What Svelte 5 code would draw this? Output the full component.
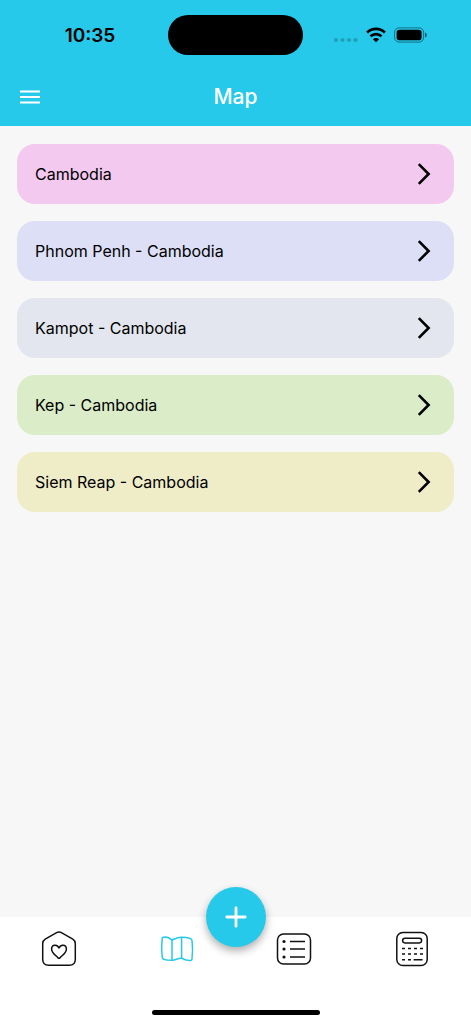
<script lang="ts">
	const places = [
		{ name: 'Cambodia', tone: 'pink' },
		{ name: 'Phnom Penh - Cambodia', tone: 'lavender' },
		{ name: 'Kampot - Cambodia', tone: 'grey' },
		{ name: 'Kep - Cambodia', tone: 'green' },
		{ name: 'Siem Reap - Cambodia', tone: 'yellow' }
	];
</script>

<div class="screen">
	<header>
		<div class="status-bar">
			<time class="clock">10:35</time>
			<div class="island"></div>
			<div class="indicators">
				<svg class="signal" width="24" height="16" viewBox="0 0 24 16">
					<circle cx="2" cy="13" r="2.1" />
					<circle cx="8.5" cy="13" r="2.1" />
					<circle cx="15" cy="13" r="2.1" />
					<circle cx="21.5" cy="13" r="2.1" />
				</svg>
				<svg width="20" height="16" viewBox="0 0 20 16">
					<path d="M1.1 5.6C6.1.7 13.9.7 18.9 5.6" fill="none" stroke="#000" stroke-width="2.7" />
					<path d="M4.5 9.3C7.7 6.3 12.3 6.3 15.5 9.3" fill="none" stroke="#000" stroke-width="2.7" />
					<path d="M10 15.3 6.9 12.2C8.7 10.6 11.3 10.6 13.1 12.2Z" />
				</svg>
				<svg width="33" height="16" viewBox="0 0 33 16">
					<rect x=".6" y=".9" width="29" height="14.2" rx="4.4" fill="none" stroke="#000" stroke-opacity=".45" stroke-width="1" />
					<rect x="2.6" y="2.8" width="25" height="10.4" rx="2.8" />
					<path d="M31 5.6C33.4 6.4 33.4 9.6 31 10.4Z" fill-opacity=".55" />
				</svg>
			</div>
		</div>
		<div class="app-bar">
			<button class="menu" aria-label="Open menu">
				<svg width="20" height="14" viewBox="0 0 20 14">
					<path d="M0 1.5H20M0 7H20M0 12.5H20" stroke="#fff" stroke-width="2" />
				</svg>
			</button>
			<h1>Map</h1>
		</div>
	</header>

	<main>
		{#each places as place}
			<button class="place {place.tone}">
				<span>{place.name}</span>
				<svg width="14" height="22" viewBox="0 0 14 22">
					<path d="M1.8 1.2 11.6 11 1.8 20.8" fill="none" stroke="#000" stroke-width="2.6" />
				</svg>
			</button>
		{/each}
	</main>

	<footer>
		<button class="add" aria-label="Add">
			<svg width="22" height="22" viewBox="0 0 22 22">
				<path d="M11 1.8V20.2M1.8 11H20.2" stroke="#fff" stroke-width="2.8" stroke-linecap="round" />
			</svg>
		</button>
		<nav>
			<a href="#home" aria-label="Home">
				<svg class="icon" width="36" height="36" viewBox="0 0 36 36">
					<path d="M15.6 1.7Q18 .5 20.4 1.7L31.8 8.2Q34.3 9.8 34.3 12.6V28.3Q34.3 34.3 28.3 34.3H7.7Q1.7 34.3 1.7 28.3V12.6Q1.7 9.8 4.2 8.2Z" />
					<path d="M18 17.4C17 13 10.6 13 10.6 18C10.6 22 14.6 24.2 16.8 26.6Q18 27.8 19.2 26.6C21.4 24.2 25.4 22 25.4 18C25.4 13 19 13 18 17.4Z" />
				</svg>
			</a>
			<a class="active" href="#map" aria-label="Map">
				<svg class="icon" width="36" height="36" viewBox="0 0 36 36">
					<path d="M13 9.2C10.5 6.6 7 5.8 4.2 6.2Q3.2 6.4 3.2 7.4C2.5 14 2.5 21 3.2 26.2C3.4 28.6 6 29.2 13 29.2C16 29.6 19 26.8 22.6 27.2C26 28.8 29 29.8 31.8 29.4Q33 29.2 33 28C33.7 22 33.7 15 33 9.4C32.6 7 29 6.4 22.6 6.2C18 6 15.8 8 13 9.2Z" />
					<path d="M13 9.2V29M22.6 6.2V27.2" />
				</svg>
			</a>
			<a href="#list" aria-label="List">
				<svg class="icon" width="36" height="36" viewBox="0 0 36 36">
					<rect x="1.5" y="3" width="33" height="30" rx="6" />
					<path d="M14 10.5H29M14 18H29M14 26H29" />
					<g class="dots">
						<circle cx="8" cy="10.5" r="1.6" />
						<circle cx="8" cy="18" r="1.6" />
						<circle cx="8" cy="26" r="1.6" />
					</g>
				</svg>
			</a>
			<a href="#calculator" aria-label="Calculator">
				<svg class="icon" width="36" height="36" viewBox="0 0 36 36">
					<rect x="2.8" y="1.5" width="30.4" height="33" rx="6" />
					<rect x="8.6" y="7.3" width="19" height="4.6" rx="2.3" />
					<path d="M8 17.5H11M14 17.5H17M20 17.5H23M26 17.5H29M8 23H11M14 23H17M20 23H23M26 23H29M8 28.8H11M14 28.8H17M19.6 28.8H28.6" />
				</svg>
			</a>
		</nav>
		<div class="home-indicator"></div>
	</footer>
</div>

<style>
	:global(body) {
		background: #f7f7f7;
	}

	.screen {
		display: flex;
		flex-direction: column;
		min-height: 100vh;
		font-family: Inter, "Liberation Sans", sans-serif;
		color: #000;
		background: #f7f7f7;
	}

	button {
		border: none;
		padding: 0;
		font: inherit;
		color: inherit;
		cursor: pointer;
	}

	svg {
		display: block;
	}

	header {
		background: #26c9e9;
	}

	.status-bar {
		display: grid;
		grid-template-columns: 1fr 135px 1fr;
		align-items: center;
		height: 70px;
	}

	.clock {
		padding-left: 12px;
		text-align: center;
		font-size: 19px;
		font-weight: 600;
	}

	.island {
		height: 40px;
		border-radius: 20px;
		background: #000;
	}

	.indicators {
		display: flex;
		justify-content: center;
		gap: 8px;
		padding-right: 14px;
	}

	.signal {
		opacity: 0.2;
	}

	.app-bar {
		display: grid;
		grid-template-columns: 1fr auto 1fr;
		align-items: center;
		padding: 13px 20px 15px;
	}

	.menu {
		justify-self: start;
		background: none;
	}

	h1 {
		margin: 0;
		font-size: 21px;
		line-height: 28px;
		font-weight: 500;
		color: #fff;
	}

	main {
		flex: 1;
		display: flex;
		flex-direction: column;
		gap: 17px;
		padding: 18px 17px 48px;
	}

	.place {
		display: flex;
		align-items: center;
		justify-content: space-between;
		height: 60px;
		padding: 0 23px 0 18px;
		border-radius: 18px;
		font-size: 16px;
		line-height: 20px;
		text-align: left;
	}

	.pink {
		background: #f4c9ef;
	}

	.lavender {
		background: #dddff6;
	}

	.grey {
		background: #e3e6ee;
	}

	.green {
		background: #daecc8;
	}

	.yellow {
		background: #efedc8;
	}

	footer {
		position: relative;
		padding-bottom: 9px;
		background: #fff;
	}

	.add {
		position: absolute;
		top: -30px;
		left: calc(50% - 30px);
		display: grid;
		place-items: center;
		width: 60px;
		height: 60px;
		border-radius: 50%;
		background: #26c9e9;
		box-shadow: 0 4px 8px rgba(0, 0, 0, 0.32);
	}

	nav {
		display: grid;
		grid-template-columns: repeat(4, 1fr);
		justify-items: center;
		padding: 14px 0 43px;
	}

	nav a {
		color: #111;
	}

	nav a.active {
		color: #26c9e9;
	}

	.icon {
		fill: none;
		stroke: currentColor;
		stroke-width: 1.5;
	}

	.dots {
		fill: currentColor;
		stroke: none;
	}

	.home-indicator {
		width: 168px;
		height: 5px;
		margin: 0 auto;
		border-radius: 3px;
		background: #000;
	}
</style>
